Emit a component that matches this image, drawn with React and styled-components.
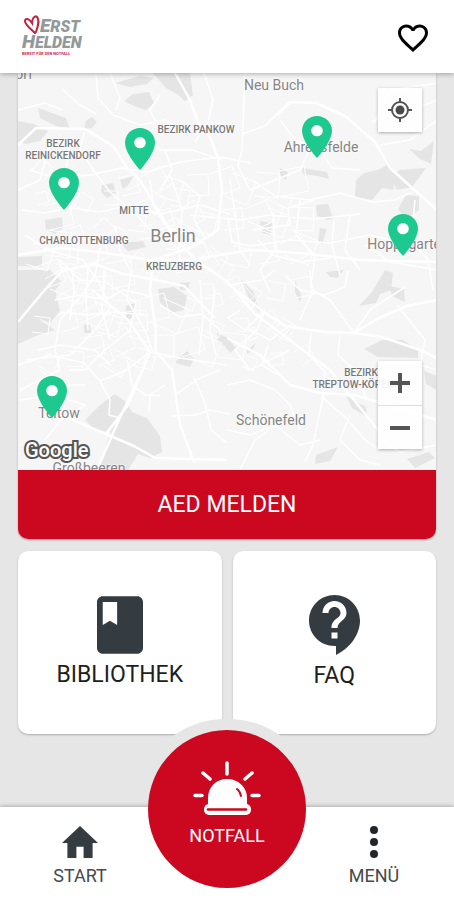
import styled, { createGlobalStyle } from "styled-components";
import { MdFavoriteBorder } from "react-icons/md";

const GlobalStyle = createGlobalStyle`
  * {
    box-sizing: border-box;
  }

  body {
    margin: 0;
    background-color: #e6e6e6;
    font-family: Roboto, "Liberation Sans", sans-serif;
  }
`;

const Container = styled.div`
  display: flex;
  flex-direction: column;
  min-height: 100vh;
`;

const Header = styled.header`
  position: sticky;
  top: 0;
  z-index: 3;
  display: flex;
  align-items: center;
  justify-content: space-between;
  height: 73px;
  padding: 2px 23px 0 22px;
  background-color: white;
  box-shadow: 0 1px 5px rgba(0, 0, 0, 0.3);
`;

const Logo = styled.a`
  display: flex;
  flex-direction: column;
  color: #92999b;
  font-size: 16px;
  font-style: italic;
  font-weight: 900;
  line-height: 16px;
  text-decoration: none;
`;

const LogoLine = styled.span`
  display: flex;
  align-items: flex-end;
  height: 16px;
`;

const Initial = styled.span`
  font-size: 19px;
`;

const LogoHeart = styled.svg`
  width: 18px;
  height: 20px;
`;

const Slogan = styled.span`
  color: #d2405a;
  font-size: 4px;
  font-style: normal;
  line-height: 5px;
`;

const IconButton = styled.button`
  display: flex;
  padding: 0;
  border: none;
  background: none;
  color: black;
  cursor: pointer;
`;

const Main = styled.main`
  flex: 1;
  display: flex;
  flex-direction: column;
  gap: 12px;
  padding: 0 18px 73px;
`;

const MapCard = styled.section`
  overflow: hidden;
  border-radius: 0 0 10px 10px;
  box-shadow: 0 1px 2px rgba(0, 0, 0, 0.3);
`;

const MapArea = styled.div`
  position: relative;
  height: 397px;
  overflow: hidden;
  background-color: #f6f6f6;
`;

const Terrain = styled.svg`
  display: block;
  width: 100%;
  height: 100%;
`;

const Label = styled.span`
  position: absolute;
  left: ${(props) => props.$x}px;
  top: ${(props) => props.$y}px;
  transform: translate(-50%, -50%);
  color: ${(props) => (props.$kind === "district" ? "#777" : "#858585")};
  font-size: ${(props) => ({ district: 10, town: 14, city: 18 })[props.$kind]}px;
  font-weight: ${(props) => (props.$kind === "district" ? 500 : 400)};
  line-height: ${(props) => (props.$kind === "district" ? 12 : 20)}px;
  text-align: center;
  text-shadow: 0 0 2px white, 0 0 2px white;
  white-space: pre;
`;

const Pin = styled.button`
  position: absolute;
  left: ${(props) => props.$x}px;
  top: ${(props) => props.$y}px;
  width: 30px;
  height: 42px;
  padding: 0;
  border: none;
  background: none;
  transform: translate(-50%, -100%);
  cursor: pointer;

  svg {
    display: block;
    width: 100%;
    height: 100%;
  }
`;

const MapControls = styled.div`
  position: absolute;
  right: 14px;
  ${(props) => (props.$bottom ? "bottom: 21px;" : "top: 15px;")}
  background-color: rgba(255, 255, 255, 0.9);
  box-shadow: 0 1px 3px rgba(0, 0, 0, 0.3);
`;

const MapButton = styled.button`
  display: flex;
  align-items: center;
  justify-content: center;
  width: 44px;
  height: 44px;
  padding: 0;
  border: none;
  background: none;
  cursor: pointer;

  & + & {
    border-top: 1px solid #e0e0e0;
  }
`;

const Google = styled.span`
  position: absolute;
  left: 7px;
  bottom: 8px;
  color: white;
  font-size: 20px;
  font-weight: 500;
  line-height: 24px;
  -webkit-text-stroke: 4px #555;
  paint-order: stroke fill;
`;

const ReportButton = styled.button`
  display: block;
  width: 100%;
  height: 69px;
  border: none;
  background-color: #cc0821;
  color: white;
  font-family: inherit;
  font-size: 23px;
  cursor: pointer;
`;

const Tiles = styled.div`
  display: grid;
  grid-template-columns: 1fr 1fr;
  gap: 11px;
`;

const Tile = styled.a`
  display: flex;
  flex-direction: column;
  align-items: center;
  justify-content: center;
  gap: 7px;
  height: 183px;
  border-radius: 10px;
  background-color: white;
  box-shadow: 0 1px 2px rgba(0, 0, 0, 0.25);
  color: #1c1f21;
  font-size: 23px;
  line-height: 28px;
  text-decoration: none;
`;

const Footer = styled.footer`
  position: sticky;
  bottom: 0;
  z-index: 2;
`;

// grey notch that lifts the emergency button off the tiles
const Notch = styled.div`
  position: absolute;
  bottom: 100%;
  left: 50%;
  width: 180px;
  height: 88px;
  border-radius: 90px 90px 0 0;
  background-color: #e6e6e6;
  transform: translateX(-50%);
`;

const Nav = styled.nav`
  position: relative;
  display: grid;
  grid-template-columns: 1fr 158px 1fr;
  height: 93px;
  padding: 0 12px;
  background-color: white;
  box-shadow: 0 -1px 4px rgba(0, 0, 0, 0.25);
`;

const NavItem = styled.a`
  display: flex;
  flex-direction: column;
  align-items: center;
  justify-content: flex-end;
  gap: 8px;
  padding-bottom: 14px;
  color: #45494c;
  font-size: 18px;
  line-height: 20px;
  text-decoration: none;
`;

const EmergencyButton = styled.button`
  display: flex;
  flex-direction: column;
  align-items: center;
  gap: 10px;
  width: 158px;
  height: 158px;
  margin-top: -77px;
  padding: 31px 0 0;
  border: none;
  border-radius: 50%;
  background-color: #cc0821;
  color: white;
  font-family: inherit;
  font-size: 18px;
  line-height: 20px;
  cursor: pointer;
`;

const labels = [
  { text: "orf", x: 6, y: 1, kind: "town" },
  { text: "Neu Buch", x: 256, y: 12, kind: "town" },
  { text: "BEZIRK PANKOW", x: 178, y: 57, kind: "district" },
  { text: "BEZIRK\nREINICKENDORF", x: 45, y: 77, kind: "district" },
  { text: "Ahrensfelde", x: 303, y: 74, kind: "town" },
  { text: "MITTE", x: 116, y: 138, kind: "district" },
  { text: "CHARLOTTENBURG", x: 66, y: 168, kind: "district" },
  { text: "Berlin", x: 155, y: 163, kind: "city" },
  { text: "KREUZBERG", x: 156, y: 194, kind: "district" },
  { text: "Hoppegarten", x: 390, y: 171, kind: "town" },
  { text: "BEZIRK\nTREPTOW-KÖPENICK", x: 343, y: 306, kind: "district" },
  { text: "Teltow", x: 41, y: 340, kind: "town" },
  { text: "Schönefeld", x: 253, y: 347, kind: "town" },
  { text: "Großbeeren", x: 71, y: 395, kind: "town" },
];

const pins = [
  { name: "Pankow", x: 122, y: 97 },
  { name: "Reinickendorf", x: 46, y: 137 },
  { name: "Ahrensfelde", x: 299, y: 85 },
  { name: "Hoppegarten", x: 385, y: 183 },
  { name: "Teltow", x: 34, y: 345 },
];

const parks = [
  "M18 270L50 270L62 282L47 300L40 320L55 330L36 336L18 344Z",
  "M43 292L55 290L60 311L50 323L38 318L36 304Z",
  "M18 121L34 124L48 131L40 141L26 144L18 142Z",
  "M38 108L66 118L70 129L56 126L40 118Z",
  "M115 83L140 76L154 78L147 84L130 87Z",
  "M133 94L149 92L154 103L146 110L134 106L124 101Z",
  "M153 73L190 73L193 95L185 101L177 94L166 88Z",
  "M86 121L92 117L97 122L92 128L84 129Z",
  "M102 185L113 183L116 193L107 198L101 192Z",
  "M120 180L134 176L128 185L123 189Z",
  "M45 220L62 217L63 228L55 234L46 230Z",
  "M120 243L143 241L146 247L128 251Z",
  "M18 257L42 256L42 267L18 266Z",
  "M158 289L174 287L187 296L184 310L170 313L160 302Z",
  "M179 283L190 282L188 290L180 290Z",
  "M126 306L135 303L134 316L126 322Z",
  "M84 325L90 324L91 333L84 333Z",
  "M85 420L100 405L115 394L126 402L132 412L147 418L160 436L162 452L150 458L138 454L128 470L99 470L106 445L111 432L96 431Z",
  "M176 361L187 351L194 359L190 367L176 363Z",
  "M217 333L228 338L228 348L218 342Z",
  "M356 180L364 173L378 170L389 164L396 175L393 190L382 188L372 200L355 197Z",
  "M399 170L426 168L412 187L397 190L392 180Z",
  "M406 195L419 196L419 210L406 219L398 209Z",
  "M409 149L421 151L434 141L431 164L420 159Z",
  "M316 205L328 204L333 218L328 220L317 216Z",
  "M320 228L327 229L322 244L318 241Z",
  "M280 168L288 172L286 180L280 176Z",
  "M302 168L327 172L329 179L318 176L303 174Z",
  "M260 221L272 223L271 235L262 233Z",
  "M385 270L393 273L391 290L380 294L376 303L359 306L372 292Z",
  "M389 286L404 289L405 302L392 296Z",
  "M364 349L382 340L403 340L418 350L418 358L378 357Z",
  "M240 279L253 291L260 313L252 304Z",
  "M326 272L344 270L337 278L330 277Z",
  "M295 280L302 298L300 302L295 292Z",
  "M247 350L256 343L252 351L247 354Z",
  "M228 338L236 348L230 353L224 345Z",
  "M316 455L338 447L330 461L315 464Z",
  "M346 396L366 407L367 417L352 408Z",
  "M424 371L437 376L437 390L426 384Z",
  "M407 459L429 452L435 458L415 468Z",
];

const highways = [
  "M18 145L36 128L85 129L113 146L127 168L140 180L160 214L175 238L196 260L229 283L255 314L286 337L300 348L330 370L378 430",
  "M175 73L190 100L198 122L210 137L218 158L222 190L218 230L190 248L153 260L150 290L156 330L155 350L172 370L180 425L194 462",
  "M18 322L43 292L62 271L95 264L123 274L152 279L184 286L215 318",
  "M61 415L106 434L134 446L155 458L227 460",
  "M106 434L128 405L150 352L128 320L92 290",
  "M97 470L117 424L140 375",
  "M277 115L290 102L316 103L345 116L375 142L390 168L437 210",
  "M227 283L265 313L285 326L325 332L354 333L377 319L407 306L437 300",
  "M227 338L260 355L290 385L320 393L355 395L437 420",
  "M18 255L60 248L100 252L150 260L190 260L250 250L300 253L360 260L437 262",
  "M354 333L382 337L420 350L437 358",
];

const streets = [
  "M110 73L120 98L116 110M160 95L150 110L156 122M18 110L45 103L62 110M204 73L213 100L208 122L195 142",
  "M85 129L80 150L94 171L110 192L135 213L150 230L180 250",
  "M30 170L55 178L90 175L121 168L147 172L180 162L220 157L250 163",
  "M22 210L44 213L72 208L100 212L130 205L160 214L200 205L230 214",
  "M25 235L48 250L83 260L100 284L110 308L95 330L70 355L25 360",
  "M100 248L95 276L78 300L60 320L55 350L60 370L20 390",
  "M60 260L80 280L106 282L136 303L130 330L105 350L85 370L70 370",
  "M115 225L120 250L131 272L127 300L145 330L152 350",
  "M18 365L50 355L84 363L100 381L125 371L150 352L180 358L227 365",
  "M55 300L80 295L105 300L124 290L150 296M60 312L86 315L115 312L145 315",
  "M72 270L74 290L70 320M88 266L86 300L88 330M104 270L102 310L110 340",
  "M38 350L60 345L95 350L110 365M40 370L60 385L85 385M20 400L55 395L85 405L61 420L45 440",
  "M100 381L110 400L109 415L120 418M127 360L132 385L145 395L160 396M165 385L150 395L149 412",
  "M172 416L195 415L210 410L230 414M175 395L200 378L220 370M194 378L205 403L211 430L227 443",
  "M160 305L180 317L202 314L220 330M200 280L203 320L199 355M215 290L210 330L216 355",
  "M180 180L200 196L194 220L205 238M170 175L182 210L179 248M150 180L153 205L166 226L200 240",
  "M190 215L240 220L270 215L314 219L360 214M230 180L235 214L240 250L250 265",
  "M245 73L244 100L242 150L238 166L250 190L300 170L310 148L320 140",
  "M242 134L265 126L289 102M280 120L295 140L320 150L332 168L360 170",
  "M252 180L275 196L310 200L340 193L372 202L395 200L410 193",
  "M273 212L275 250L260 270L270 292M300 200L296 235L315 256L312 280M334 220L332 245L340 275M350 214L345 250L360 270",
  "M228 220L232 242L250 246L290 240L330 243L370 235L400 242",
  "M230 285L262 280L275 270M240 310L228 318L245 330L265 310M265 310L257 330L235 350L250 370L290 350",
  "M300 320L312 293L310 270M285 275L300 290L325 295L345 287L348 270M312 290L330 300L354 333L370 310L405 287",
  "M311 332L309 355L325 372L323 398L318 420L313 445L305 462M340 335L338 355L360 375L366 400",
  "M227 385L250 380L275 390L290 405L300 430M323 398L345 417L365 440L380 450",
  "M227 430L250 435L275 425L300 445L320 440M240 470L255 440L275 425M350 415L340 440L360 460L380 465",
  "M372 122L390 112L425 105L437 100M375 122L390 90L437 83M380 145L410 140L437 120M365 245L390 262L437 270",
  "M415 200L411 240L428 260L433 290M397 305L425 340L420 365L437 370M380 440L400 452L437 445",
  "M63 90L80 105L96 114M96 75L98 98L113 115L140 125L165 120L190 135M70 140L66 170L75 190L70 215",
  "M18 190L40 180L48 150L60 135M140 130L160 150L192 150L222 160M165 150L172 170L160 190",
  "M253 230L290 225L288 208L315 200M258 240L272 255L300 262L330 258M250 330L270 340L290 325M268 345L262 365L278 375",
];

// fine side streets of the inner city
const blocks = Array.from({ length: 95 }, (_, i) => {
  const x = 32 + ((i * 47) % 270);
  const y = 170 + ((i * 71) % 195);
  const dx = 10 + ((i * 13) % 16);
  const dy = ((i * 29) % 24) - 12;
  return `M${x} ${y}l${dx} ${dy}l${-dy} ${dx}l${-dx} ${-dy}`;
}).join("");

const LocateIcon = () => (
  <svg width="26" height="26" viewBox="0 0 26 26" fill="none" stroke="#555" strokeWidth="2">
    <circle cx="13" cy="13" r="8" />
    <circle cx="13" cy="13" r="4.5" fill="#4a4a4a" stroke="none" />
    <path d="M13 1v5M13 20v5M1 13h5M20 13h5" />
  </svg>
);

const ZoomIcon = ({ plus }) => (
  <svg width="20" height="20" viewBox="0 0 20 20" stroke="#555" strokeWidth="4">
    <path d={plus ? "M0 10h20M10 0v20" : "M0 10h20"} />
  </svg>
);

const SirenIcon = () => (
  <svg width="68" height="55" viewBox="193 761 68 55" fill="none" strokeLinecap="round">
    <path
      d="M227 763v11M203 773l7 6M252 773l-7 6M195 795.500h7M252 795.500h7"
      stroke="white"
      strokeWidth="3.500"
    />
    <path d="M208 806v-8c0-11 8-19 19-19s20 8 20 19v8z" fill="white" />
    <rect x="204" y="804" width="47" height="11" rx="5" fill="white" />
    <path d="M208 809.500h38" stroke="#cc0821" strokeWidth="2.500" />
    <path d="M237 789q3 2 4 7" stroke="#cc0821" strokeWidth="2" />
  </svg>
);

const App = () => {
  return (
    <>
      <GlobalStyle />
      <Container>
        <Header>
          <Logo href="#" aria-label="Erst Helden">
            <LogoLine>
              <LogoHeart viewBox="0 0 18 20" fill="none" stroke="#c4203a" strokeLinecap="round">
                <path
                  d="M13 18C9 14 3 10 3 6c0-3 4-3 7 2C10 3 13 0 15 2c3 3 1 9-1 15"
                  strokeWidth="2"
                />
              </LogoHeart>
              <span>
                <Initial>E</Initial>RST
              </span>
            </LogoLine>
            <LogoLine>
              <span>
                <Initial>H</Initial>ELDEN
              </span>
            </LogoLine>
            <Slogan>BEREIT FÜR DEN NOTFALL</Slogan>
          </Logo>
          <IconButton aria-label="Favoriten">
            <MdFavoriteBorder size={36} />
          </IconButton>
        </Header>

        <Main>
          <MapCard>
            <MapArea>
              <Terrain viewBox="18 73 419 397" preserveAspectRatio="xMinYMin slice">
                <path d={parks.join("")} fill="#e5e5e5" />
                <g fill="none" stroke="white" strokeLinejoin="round">
                  <path d={blocks} strokeWidth="1" />
                  <path d={streets.join("")} strokeWidth="1.500" />
                  <path d={highways.join("")} strokeWidth="2.500" />
                </g>
              </Terrain>
              {labels.map((label) => (
                <Label key={label.text} $x={label.x} $y={label.y} $kind={label.kind}>
                  {label.text}
                </Label>
              ))}
              {pins.map((pin) => (
                <Pin key={pin.name} $x={pin.x} $y={pin.y} aria-label={`AED ${pin.name}`}>
                  <svg viewBox="5 2 14 20" preserveAspectRatio="none">
                    <path
                      d="M12 2C8.130 2 5 5.130 5 9c0 5.250 7 13 7 13s7-7.750 7-13c0-3.870-3.130-7-7-7z"
                      fill="#1ec990"
                    />
                    <circle cx="12" cy="9" r="2.700" fill="white" />
                  </svg>
                </Pin>
              ))}
              <Google>Google</Google>
              <MapControls>
                <MapButton aria-label="Mein Standort">
                  <LocateIcon />
                </MapButton>
              </MapControls>
              <MapControls $bottom>
                <MapButton aria-label="Vergrößern">
                  <ZoomIcon plus />
                </MapButton>
                <MapButton aria-label="Verkleinern">
                  <ZoomIcon />
                </MapButton>
              </MapControls>
            </MapArea>
            <ReportButton>AED MELDEN</ReportButton>
          </MapCard>

          <Tiles>
            <Tile href="#bibliothek">
              <svg width="46" height="58" viewBox="4 2 16 20" fill="#343c42">
                <path d="M18 2H6c-1.100 0-2 .9-2 2v16c0 1.100.9 2 2 2h12c1.100 0 2-.9 2-2V4c0-1.100-.9-2-2-2zM6 4h5v8l-2.500-1.500L6 12V4z" />
              </svg>
              BIBLIOTHEK
            </Tile>
            <Tile href="#faq">
              <svg width="51" height="60" viewBox="3 2 17 20" fill="#343c42">
                <path d="M11.500 2C6.810 2 3 5.810 3 10.500S6.810 19 11.500 19h.5v3c4.860-2.340 8-7 8-11.500C20 5.810 16.190 2 11.500 2zm1 14.500h-2v-2h2v2zm0-3.500h-2c0-3.250 3-3 3-5 0-1.100-.9-2-2-2s-2 .9-2 2h-2c0-2.210 1.790-4 4-4s4 1.790 4 4c0 2.500-3 2.750-3 5z" />
              </svg>
              FAQ
            </Tile>
          </Tiles>
        </Main>

        <Footer>
          <Notch />
          <Nav>
            <NavItem href="#start">
              <svg width="36" height="32" viewBox="2 3 20 17" fill="#343c42" preserveAspectRatio="none">
                <path d="M10 20v-6h4v6h5v-8h3L12 3 2 12h3v8z" />
              </svg>
              START
            </NavItem>
            <EmergencyButton>
              <SirenIcon />
              NOTFALL
            </EmergencyButton>
            <NavItem href="#menu">
              <svg width="8" height="32" viewBox="0 0 8 32" fill="#222629">
                <circle cx="4" cy="4" r="4" />
                <circle cx="4" cy="16" r="4" />
                <circle cx="4" cy="28" r="4" />
              </svg>
              MENÜ
            </NavItem>
          </Nav>
        </Footer>
      </Container>
    </>
  );
};

export default App;
